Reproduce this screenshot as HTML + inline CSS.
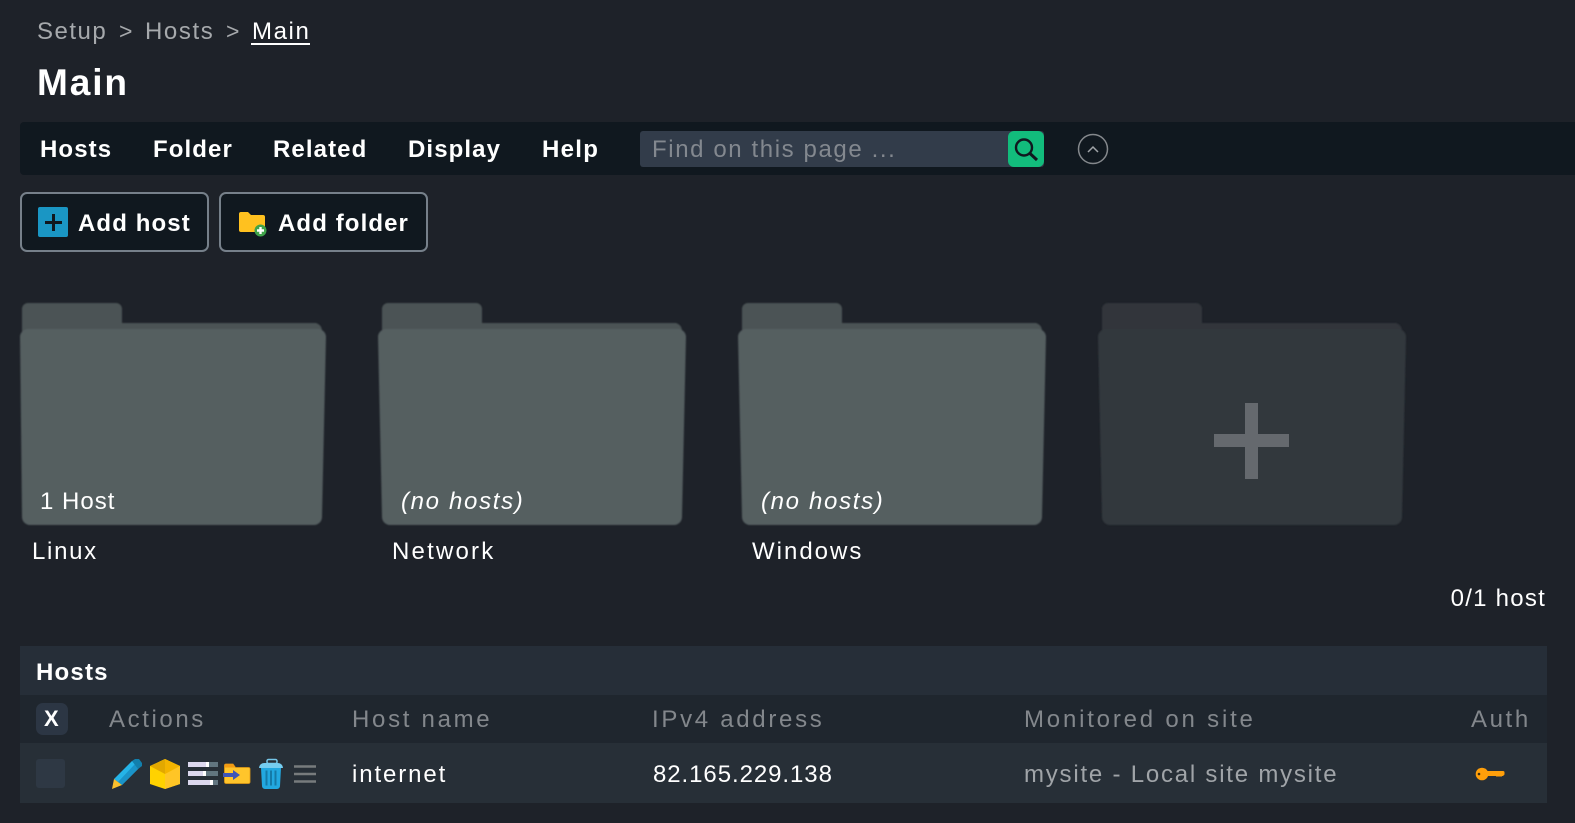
<!DOCTYPE html>
<html lang="en"><head><meta charset="utf-8"><title>Main</title>
<style>
html,body{margin:0;padding:0;width:1575px;height:823px;overflow:hidden;background:#1e2229;font-family:"Liberation Sans",sans-serif;color:#fff}
.b{position:absolute}
.t{position:absolute;white-space:nowrap;line-height:30px;font-size:24px;letter-spacing:1.3px}
.m{font-weight:bold;font-size:24px;letter-spacing:1.1px}
.g{color:#83878c}
</style></head><body>
<div class="b" style="left:20px;top:122px;width:1555px;height:53px;background:#10181f;border-radius:4px 0 0 4px"></div>
<div class="b" style="left:20px;top:192px;width:185px;height:56px;background:#10181f;border:2px solid #76808a;border-radius:7px"></div>
<div class="b" style="left:219px;top:192px;width:205px;height:56px;background:#10181f;border:2px solid #76808a;border-radius:7px"></div>
<div class="b" style="left:640px;top:131px;width:404px;height:36px;background:#323c4a;border-radius:3px"></div>
<div class="b" style="left:1008px;top:131px;width:36px;height:36px;background:#12bc7c;border-radius:6px"></div>
<div class="b" style="left:20px;top:646px;width:1527px;height:49px;background:#262e38"></div>
<div class="b" style="left:20px;top:695px;width:1527px;height:48px;background:#1f262e"></div>
<div class="b" style="left:20px;top:743px;width:1527px;height:60px;background:#272f37"></div>
<div class="b" style="left:36px;top:703px;width:32px;height:32px;background:#2c3644;border-radius:7px"></div>
<div class="b" style="left:36px;top:759px;width:29px;height:29px;background:#2e3844;border-radius:3px"></div>

<svg class="b" style="left:0;top:0" width="1575" height="823" viewBox="0 0 1575 823" xmlns="http://www.w3.org/2000/svg">
<defs>
<filter id="soft" x="-5%" y="-5%" width="110%" height="110%"><feGaussianBlur stdDeviation="0.7"/></filter>
<path id="tab" d="M22 334V309a6 6 0 0 1 6-6h88a6 6 0 0 1 6 6v14h194a8 8 0 0 1 6 7v4z"/>
<path id="f1" d="M20 337a8 8 0 0 1 8-8h290a8 8 0 0 1 8 8l-4 180a8 8 0 0 1-8 8H30a8 8 0 0 1-8-8z"/>
<path id="f2" d="M18 337a8 8 0 0 1 8-8h292a8 8 0 0 1 8 8l-4 180a8 8 0 0 1-8 8H30a8 8 0 0 1-8-8z"/>
</defs>
<g filter="url(#soft)">
<use href="#tab" fill="#4b5355"/><use href="#f1" fill="#555e60"/>
<use href="#tab" x="360" fill="#4b5355"/><use href="#f2" x="360" fill="#555e60"/>
<use href="#tab" x="720" fill="#4b5355"/><use href="#f2" x="720" fill="#555e60"/>
<use href="#tab" x="1080" fill="#30363b"/><use href="#f2" x="1080" fill="#33383d"/>
</g>
<rect x="1214" y="434" width="75" height="13" fill="#65696e"/><rect x="1245" y="403" width="13" height="76" fill="#65696e"/>

<!-- add host icon -->
<rect x="38" y="207" width="30" height="30" rx="2" fill="#1a96c4"/>
<path d="M53.500 214v17M45 222.500h17" stroke="#10181f" stroke-width="3" fill="none"/>
<!-- add folder icon -->
<path d="M239 214a2 2 0 0 1 2-2h7l3 3h12a2 2 0 0 1 2 2v13a2 2 0 0 1-2 2h-22a2 2 0 0 1-2-2z" fill="#ffc11f"/>
<circle cx="260.500" cy="230.500" r="6" fill="#3fa34a"/>
<path d="M260.500 227v7M257 230.500h7" stroke="#fff" stroke-width="2.400"/>
<!-- search -->
<circle cx="1024" cy="147.500" r="8" fill="none" stroke="#10181f" stroke-width="2.400"/>
<path d="M1030 153.500l7 6.500" stroke="#10181f" stroke-width="3"/>
<!-- collapse -->
<circle cx="1093" cy="149" r="14.500" fill="none" stroke="#84888c" stroke-width="1.500"/>
<path d="M1088 152l5-5 5 5" fill="none" stroke="#a0a4a8" stroke-width="1.500"/>

<!-- pencil -->
<path d="M114 779l18-18 10 4-4 4-16 16z" fill="#25b4e8"/>
<path d="M118 782l17-18 3 5-16 16z" fill="#1a94c9"/>
<path d="M132 761l3-2h4l3 4v3l-4 3z" fill="#127fac"/>
<path d="M114 779l8 6-10 4z" fill="#fbc02d"/>
<!-- box -->
<path d="M165 759l15 7v18l-15 5-15-5v-18z" fill="#ffd200"/>
<path d="M165 774l15-8v18l-15 5z" fill="#ffc526"/>
<path d="M165 759l15 7-15 8z" fill="#f4b400"/>
<path d="M165 759l-15 7 15 8z" fill="#e2a800"/>
<!-- properties -->
<g fill="#627680"><rect x="188" y="762" width="30" height="5"/><rect x="188" y="771" width="30" height="5"/><rect x="188" y="780" width="30" height="5"/></g>
<g fill="#dcd8ee"><rect x="188" y="762" width="19" height="5"/><rect x="188" y="771" width="16" height="5"/><rect x="188" y="780" width="23" height="5"/></g>
<g fill="#fff"><rect x="206" y="762" width="3" height="5"/><rect x="203" y="771" width="3" height="5"/><rect x="210" y="780" width="3" height="5"/></g>
<!-- move folder -->
<path d="M224.500 765.500a1.500 1.500 0 0 1 1.500-1.500h7l2.500 3.500h13a1.500 1.500 0 0 1 1.500 1.500v13a1.500 1.500 0 0 1-1.500 1.500h-22.500a1.500 1.500 0 0 1-1.500-1.500z" fill="#ffc52b" stroke="#e39a14" stroke-width=".8"/>
<path d="M224.500 765.500a1.500 1.500 0 0 1 1.500-1.500h7l2.500 3.500h-11z" fill="#f29b13"/>
<path d="M223 773h10v-3l7 5-7 5v-3h-10z" fill="#3e55b8"/>
<!-- trash -->
<rect x="267" y="759.500" width="10" height="4" rx="1.500" fill="none" stroke="#76c6e8" stroke-width="1.500"/>
<path d="M259 768a5 5 0 0 1 5-5h14a5 5 0 0 1 5 5z" fill="#76cdf0"/>
<path d="M261 768h20l-1 18a3 3 0 0 1-3 3h-12a3 3 0 0 1-3-3z" fill="#22a8e0"/>
<path d="M266.500 770.500v15M271 770.500v15M275.500 770.500v15" stroke="#147aa8" stroke-width="2"/>
<!-- menu -->
<path d="M294 766.500h22M294 774h22M294 781.500h22" stroke="#777b7d" stroke-width="2.400"/>
<!-- key -->
<circle cx="1482" cy="774" r="6.300" fill="#ff9f0a"/>
<circle cx="1479" cy="774" r="1.300" fill="#3a2c10"/>
<path d="M1487 771h16a1.500 1.500 0 0 1 1.500 1.500v2l-1.500 1.500h-1l-1 1-1-1-1 1-1-1-1 1-1-1h-10z" fill="#ff9f0a"/>
</svg>

<span class="t" style="left:37px;top:17px;color:#a6a9ac;letter-spacing:1.5px">Setup</span>
<span class="t" style="left:119px;top:16px;color:#a6a9ac;font-size:23px">&gt;</span>
<span class="t" style="left:145px;top:17px;color:#a6a9ac;letter-spacing:1.6px">Hosts</span>
<span class="t" style="left:226px;top:16px;color:#a6a9ac;font-size:23px">&gt;</span>
<span class="t" style="left:252px;top:17px;letter-spacing:1.6px">Main</span>
<div class="b" style="left:251px;top:43px;width:59px;height:2px;background:#fff"></div>
<span class="t" style="left:37px;top:68px;font-size:37px;font-weight:bold;letter-spacing:1.900px">Main</span>

<span class="t m" style="left:40px;top:135px">Hosts</span>
<span class="t m" style="left:153px;top:135px">Folder</span>
<span class="t m" style="left:273px;top:135px">Related</span>
<span class="t m" style="left:408px;top:135px">Display</span>
<span class="t m" style="left:542px;top:135px;letter-spacing:1.3px">Help</span>
<span class="t" style="left:652px;top:135px;color:#83888f;font-size:24px;letter-spacing:1.6px">Find on this page ...</span>

<span class="t m" style="left:78px;top:209px">Add host</span>
<span class="t m" style="left:278px;top:209px">Add folder</span>

<span class="t" style="left:40px;top:487px;letter-spacing:1px">1 Host</span>
<span class="t" style="left:401px;top:487px;font-style:italic;letter-spacing:1.67px">(no hosts)</span>
<span class="t" style="left:761px;top:487px;font-style:italic;letter-spacing:1.67px">(no hosts)</span>
<span class="t" style="left:32px;top:537px;letter-spacing:1.7px">Linux</span>
<span class="t" style="left:392px;top:537px;letter-spacing:2.2px">Network</span>
<span class="t" style="left:752px;top:537px;letter-spacing:2px">Windows</span>
<span class="t" style="right:29px;top:584px;letter-spacing:1.25px">0/1 host</span>

<span class="t" style="left:36px;top:658px;font-weight:bold;letter-spacing:1.2px">Hosts</span>
<span class="t" style="left:44px;top:704px;font-weight:bold;font-size:22px;letter-spacing:0">X</span>
<span class="t g" style="left:109px;top:705px;letter-spacing:2.6px">Actions</span>
<span class="t g" style="left:352px;top:705px;letter-spacing:2.7px">Host name</span>
<span class="t g" style="left:652px;top:705px;letter-spacing:2.7px">IPv4 address</span>
<span class="t g" style="left:1024px;top:705px;letter-spacing:2.8px">Monitored on site</span>
<span class="t g" style="left:1471px;top:705px;letter-spacing:2.6px">Auth</span>

<span class="t" style="left:352px;top:760px;letter-spacing:1.9px">internet</span>
<span class="t" style="left:653px;top:760px;letter-spacing:.93px">82.165.229.138</span>
<span class="t" style="left:1024px;top:760px;color:#a0a4a8;letter-spacing:1.78px">mysite - Local site mysite</span>
</body></html>
